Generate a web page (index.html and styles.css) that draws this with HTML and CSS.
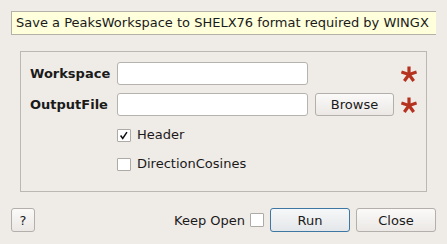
FILE: index.html
```html
<!DOCTYPE html>
<html lang="en">
<head>
    <meta charset="UTF-8">
    <title>SaveLauteNative</title>
    <link rel="stylesheet" href="styles.css">
</head>
<body>
    <div class="dialog">
        <div class="tooltip">Save a PeaksWorkspace to SHELX76 format required by WINGX</div>

        <div class="group">
            <div class="row">
                <label class="label">Workspace</label>
                <input type="text" class="field">
                <span class="spacer"></span>
                <svg class="star" viewBox="0 0 16 16"><g stroke="#b5321f" stroke-width="3.2" stroke-linecap="butt"><line x1="8" y1="8.5" x2="8" y2="0.5"/><line x1="8" y1="8.5" x2="15.6" y2="6"/><line x1="8" y1="8.5" x2="12.7" y2="15"/><line x1="8" y1="8.5" x2="3.3" y2="15"/><line x1="8" y1="8.5" x2="0.4" y2="6"/></g></svg>
            </div>
            <div class="row">
                <label class="label">OutputFile</label>
                <input type="text" class="field">
                <button class="btn browse">Browse</button>
                <svg class="star" viewBox="0 0 16 16"><g stroke="#b5321f" stroke-width="3.2" stroke-linecap="butt"><line x1="8" y1="8.5" x2="8" y2="0.5"/><line x1="8" y1="8.5" x2="15.6" y2="6"/><line x1="8" y1="8.5" x2="12.7" y2="15"/><line x1="8" y1="8.5" x2="3.3" y2="15"/><line x1="8" y1="8.5" x2="0.4" y2="6"/></g></svg>
            </div>
            <div class="check-row first">
                <span class="box"><svg viewBox="0 0 13 13"><path d="M2.5 6.5 L5 10 L10 2.5" fill="none" stroke="#111" stroke-width="1.8"/></svg></span>
                <span class="check-text">Header</span>
            </div>
            <div class="check-row">
                <span class="box"></span>
                <span class="check-text">DirectionCosines</span>
            </div>
        </div>

        <div class="footer">
            <button class="btn help">?</button>
            <span class="grow"></span>
            <span class="keep">Keep Open</span>
            <span class="box keep-box"></span>
            <button class="btn run">Run</button>
            <button class="btn close">Close</button>
        </div>
    </div>
</body>
</html>
```

FILE: styles.css
```css
body {
    margin: 0;
    padding: 0;
    background-color: #efebe7;
    font-family: "DejaVu Sans", sans-serif;
    font-size: 13px;
    color: #1a1a1a;
}

.dialog {
    width: 447px;
    height: 244px;
    padding-top: 11px;
    box-sizing: border-box;
}

.tooltip {
    margin-left: 11px;
    width: 425px;
    height: 24px;
    box-sizing: border-box;
    background: #ffffdc;
    border: 1px solid #b4b2a8;
    border-right: none;
    padding-left: 4px;
    line-height: 22px;
    white-space: nowrap;
    overflow: hidden;
}

.group {
    margin: 16px 0 0 20px;
    width: 407px;
    height: 141px;
    box-sizing: border-box;
    border: 1px solid #bbb7b3;
    padding: 10px 0 0 9px;
}

.row {
    display: flex;
    align-items: center;
    height: 23px;
    margin-bottom: 8px;
}

.label {
    width: 87px;
    font-weight: bold;
}

.field {
    width: 191px;
    height: 23px;
    box-sizing: border-box;
    border: 1px solid #b6b2ae;
    border-radius: 3px;
    background: #fff;
    margin: 0;
    padding: 0;
    outline: none;
}

.spacer {
    width: 93px;
}

.btn {
    font-family: "DejaVu Sans", sans-serif;
    font-size: 13px;
    color: #1a1a1a;
    height: 24px;
    box-sizing: border-box;
    border: 1px solid #b3afab;
    border-radius: 3px;
    background: linear-gradient(#fbfaf9, #ebe8e5);
    padding: 0;
    margin: 0;
}

.browse {
    width: 79px;
    height: 23px;
    margin-left: 7px;
    margin-right: 7px;
}

.star {
    width: 16px;
    height: 16px;
}

.check-row {
    display: flex;
    align-items: center;
    height: 16px;
    line-height: 16px;
    margin-left: 87px;
    margin-bottom: 13px;
}

.check-row.first {
    margin-top: 11px;
}

.box {
    display: inline-block;
    width: 14px;
    height: 13px;
    box-sizing: border-box;
    border: 1px solid #aeaaa6;
    background: #fff;
    border-radius: 1px;
}

.box svg {
    display: block;
    width: 12px;
    height: 11px;
}

.check-text {
    margin-left: 6px;
}

.footer {
    display: flex;
    align-items: center;
    margin: 16px 11px 0 11px;
    height: 24px;
}

.help {
    width: 24px;
}

.grow {
    flex: 1;
}

.keep {
    margin-right: 5px;
}

.keep-box {
    width: 14px;
    height: 14px;
    margin-right: 6px;
}

.run {
    width: 80px;
    border-color: #3f77a3;
    background: linear-gradient(#f6f7f8, #e4e7ea);
    margin-right: 6px;
}

.close {
    width: 80px;
}
```
